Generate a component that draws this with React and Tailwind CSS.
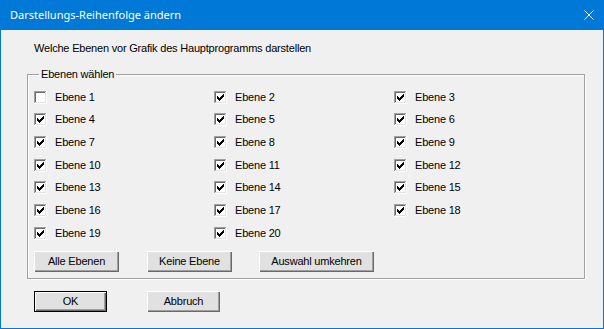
import React, { useState } from 'react';

const FONT = { fontFamily: '"Liberation Sans", Arial, sans-serif', letterSpacing: '-0.2px' };

// classic sunken checkbox, 13x13 pixels
const CheckBox = ({ checked }) => (
    <svg width="13" height="13" viewBox="0 0 13 13" shapeRendering="crispEdges" className="shrink-0">
        <rect x="0" y="0" width="13" height="13" fill="#ffffff" />
        <rect x="0" y="0" width="12" height="1" fill="#a0a0a0" />
        <rect x="0" y="0" width="1" height="12" fill="#a0a0a0" />
        <rect x="1" y="1" width="10" height="1" fill="#696969" />
        <rect x="1" y="1" width="1" height="10" fill="#696969" />
        <rect x="1" y="11" width="11" height="1" fill="#e3e3e3" />
        <rect x="11" y="1" width="1" height="11" fill="#e3e3e3" />
        {checked && (
            <g fill="#000">
                <rect x="9" y="3" width="1" height="3" />
                <rect x="8" y="4" width="1" height="3" />
                <rect x="7" y="5" width="1" height="3" />
                <rect x="6" y="6" width="1" height="3" />
                <rect x="5" y="7" width="1" height="3" />
                <rect x="4" y="6" width="1" height="3" />
                <rect x="3" y="5" width="1" height="3" />
            </g>
        )}
    </svg>
);

const Button = ({ children, className = '', isDefault = false }) => (
    <button
        className={`h-[21px] bg-[#e1e1e1] text-[11px] text-black leading-none ${
            isDefault
                ? 'border border-black shadow-[inset_1px_1px_0_#fff,inset_-1px_-1px_0_#696969,inset_-2px_-2px_0_#a0a0a0]'
                : 'shadow-[inset_1px_1px_0_#fff,inset_-1px_-1px_0_#696969,inset_-2px_-2px_0_#a0a0a0]'
        } ${className}`}
        style={FONT}
    >
        {children}
    </button>
);

export default function App() {
    const [layers, setLayers] = useState(
        Array.from({ length: 20 }, (_, i) => ({ id: i + 1, on: i !== 0 }))
    );

    const toggle = (id) =>
        setLayers((prev) => prev.map((l) => (l.id === id ? { ...l, on: !l.on } : l)));

    return (
        <div className="w-[604px] h-[329px] bg-[#f0f0f0] border-x border-b border-[#0078d7] flex flex-col text-black" style={FONT}>
            {/* title bar */}
            <div className="h-[30px] -mx-px bg-[#0078d7] flex items-center justify-between pl-[10px] pr-[10px]">
                <span className="text-white text-[11px]" style={{ fontFamily: '"Noto Sans", "Open Sans", sans-serif', letterSpacing: '0px' }}>
                    Darstellungs-Reihenfolge ändern
                </span>
                <svg width="10" height="10" viewBox="0 0 10 10">
                    <path d="M0.5 0.5 L9.5 9.5 M9.5 0.5 L0.5 9.5" stroke="#fff" strokeWidth="1" />
                </svg>
            </div>

            <div className="pl-[26px] pt-[12px]">
                <div className="pl-[7px] text-[11px] leading-[13px]">
                    Welche Ebenen vor Grafik des Hauptprogramms darstellen
                </div>

                {/* group box */}
                <div className="relative mt-[19px] w-[558px] h-[205px] border border-[#a0a0a0] shadow-[inset_1px_1px_0_#fff,1px_1px_0_#fff] pt-[11px] pl-[6px]">
                    <span className="absolute left-[11px] -top-[7px] bg-[#f0f0f0] px-[2px] text-[11px] leading-[13px]">
                        Ebenen wählen
                    </span>
                    <div className="grid grid-cols-[180px_180px_180px]">
                        {layers.map((l) => (
                            <div
                                key={l.id}
                                onClick={() => toggle(l.id)}
                                className="h-[22.67px] flex items-center cursor-default"
                            >
                                <CheckBox checked={l.on} />
                                <span className="ml-[8px] text-[11px] leading-[13px]">Ebene {l.id}</span>
                            </div>
                        ))}
                    </div>
                    <div className="flex mt-[6px]">
                        <Button className="w-[85px]">Alle Ebenen</Button>
                        <Button className="w-[85px] ml-[28px]">Keine Ebene</Button>
                        <Button className="w-[115px] ml-[27px]">Auswahl umkehren</Button>
                    </div>
                </div>

                <div className="flex mt-[12px] pl-[7px]">
                    <Button isDefault className="w-[73px]">OK</Button>
                    <Button className="w-[73px] ml-[40px]">Abbruch</Button>
                </div>
            </div>
        </div>
    );
}
